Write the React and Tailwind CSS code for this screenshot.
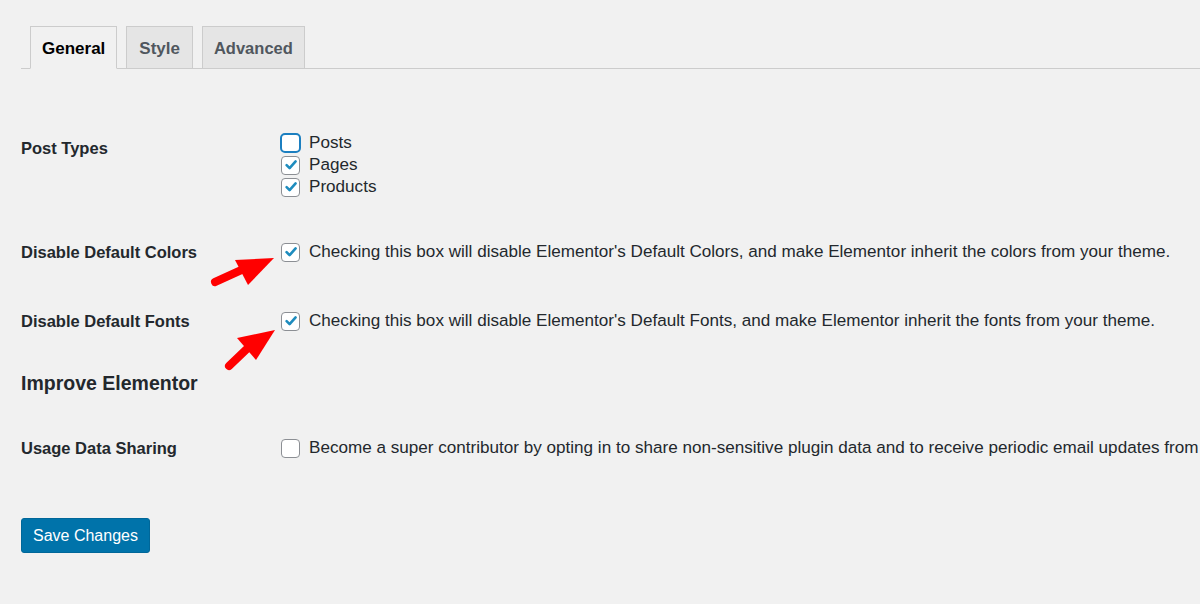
import React from 'react';

const font = { fontFamily: '"Liberation Sans", Arial, sans-serif' };

function Box({ checked, focused }) {
  if (focused) {
    return (
      <span className="w-[21px] h-[20px] -ml-[1px] mr-[8px] rounded-[5px] border-2 border-[#1c7fc0] bg-white shrink-0" />
    );
  }
  return (
    <span className="w-[19px] h-[19px] mr-[9px] rounded-[4px] border border-[#8c8f94] bg-white shrink-0 flex items-center justify-center">
      {checked && (
        <svg width="14" height="14" viewBox="0 0 14 14">
          <path d="M2.6 7.2 L5.6 10.2 L11.6 3.4" fill="none" stroke="#1e8cbe" strokeWidth="2.6" strokeLinecap="round" strokeLinejoin="round" />
        </svg>
      )}
    </span>
  );
}

function Opt({ checked, focused, children }) {
  return (
    <label className="flex items-center h-[22px] leading-[22px] whitespace-nowrap text-[17.1px]">
      <Box checked={checked} focused={focused} />
      <span>{children}</span>
    </label>
  );
}

function Row({ label, children, className }) {
  return (
    <div className={'flex items-start ' + (className || '')}>
      <div className="w-[260px] shrink-0 font-semibold leading-[22px] text-[16.5px] text-[#23282d]">{label}</div>
      <div>{children}</div>
    </div>
  );
}

export default function App() {
  return (
    <div className="relative w-full h-[604px] overflow-hidden bg-[#f1f1f1] text-[16px] text-[#23282d]" style={font}>
      {/* Tabs */}
      <div className="pt-[27px] pl-[21px]">
        <div className="flex items-end border-b border-[#cccccc] pl-[9px] gap-[9px] h-[42px]">
          <div className="h-[43px] -mb-px px-[11px] pt-[2px] flex items-center border border-[#cccccc] border-b-[#f1f1f1] bg-[#f1f1f1] font-semibold text-[17px] text-black">
            General
          </div>
          <div className="h-[42px] px-[12px] pt-[2px] flex items-center border border-[#cccccc] border-b-0 bg-[#e5e5e5] font-semibold text-[17px] text-[#50575e]">
            Style
          </div>
          <div className="h-[42px] px-[11px] pt-[2px] flex items-center border border-[#cccccc] border-b-0 bg-[#e5e5e5] font-semibold text-[16.5px] text-[#50575e]">
            Advanced
          </div>
        </div>
      </div>

      <div className="pl-[21px]">
        <Row label={<div className="pt-[5px]">Post Types</div>} className="mt-[63px]">
          <Opt focused>Posts</Opt>
          <Opt checked>Pages</Opt>
          <Opt checked>Products</Opt>
        </Row>

        <Row label="Disable Default Colors" className="mt-[43px]">
          <Opt checked>
            Checking this box will disable Elementor's Default Colors, and make Elementor inherit the colors from your theme.
          </Opt>
        </Row>

        <Row label="Disable Default Fonts" className="mt-[47px]">
          <Opt checked>
            Checking this box will disable Elementor's Default Fonts, and make Elementor inherit the fonts from your theme.
          </Opt>
        </Row>

        <h2 className="mt-[37px] text-[19.5px] leading-[28px] font-semibold text-[#23282d]">Improve Elementor</h2>

        <Row label="Usage Data Sharing" className="mt-[40px]">
          <Opt>
            Become a super contributor by opting in to share non-sensitive plugin data and to receive periodic email updates from us.
          </Opt>
        </Row>

        <button className="mt-[59px] h-[35px] px-[11px] rounded-[3px] border border-[#006799] bg-[#0073aa] text-white text-[16px]">
          Save Changes
        </button>
      </div>

      {/* Annotation arrows */}
      <svg className="absolute inset-0 pointer-events-none" width="1200" height="604">
        <line x1="215" y1="282" x2="248" y2="267" stroke="#ff0000" strokeWidth="8" strokeLinecap="round" />
        <polygon points="235,260 274,258 248,285" fill="#ff0000" />
        <line x1="229" y1="366" x2="252" y2="344" stroke="#ff0000" strokeWidth="8" strokeLinecap="round" />
        <polygon points="237,338 275,330 256,360" fill="#ff0000" />
      </svg>
    </div>
  );
}
